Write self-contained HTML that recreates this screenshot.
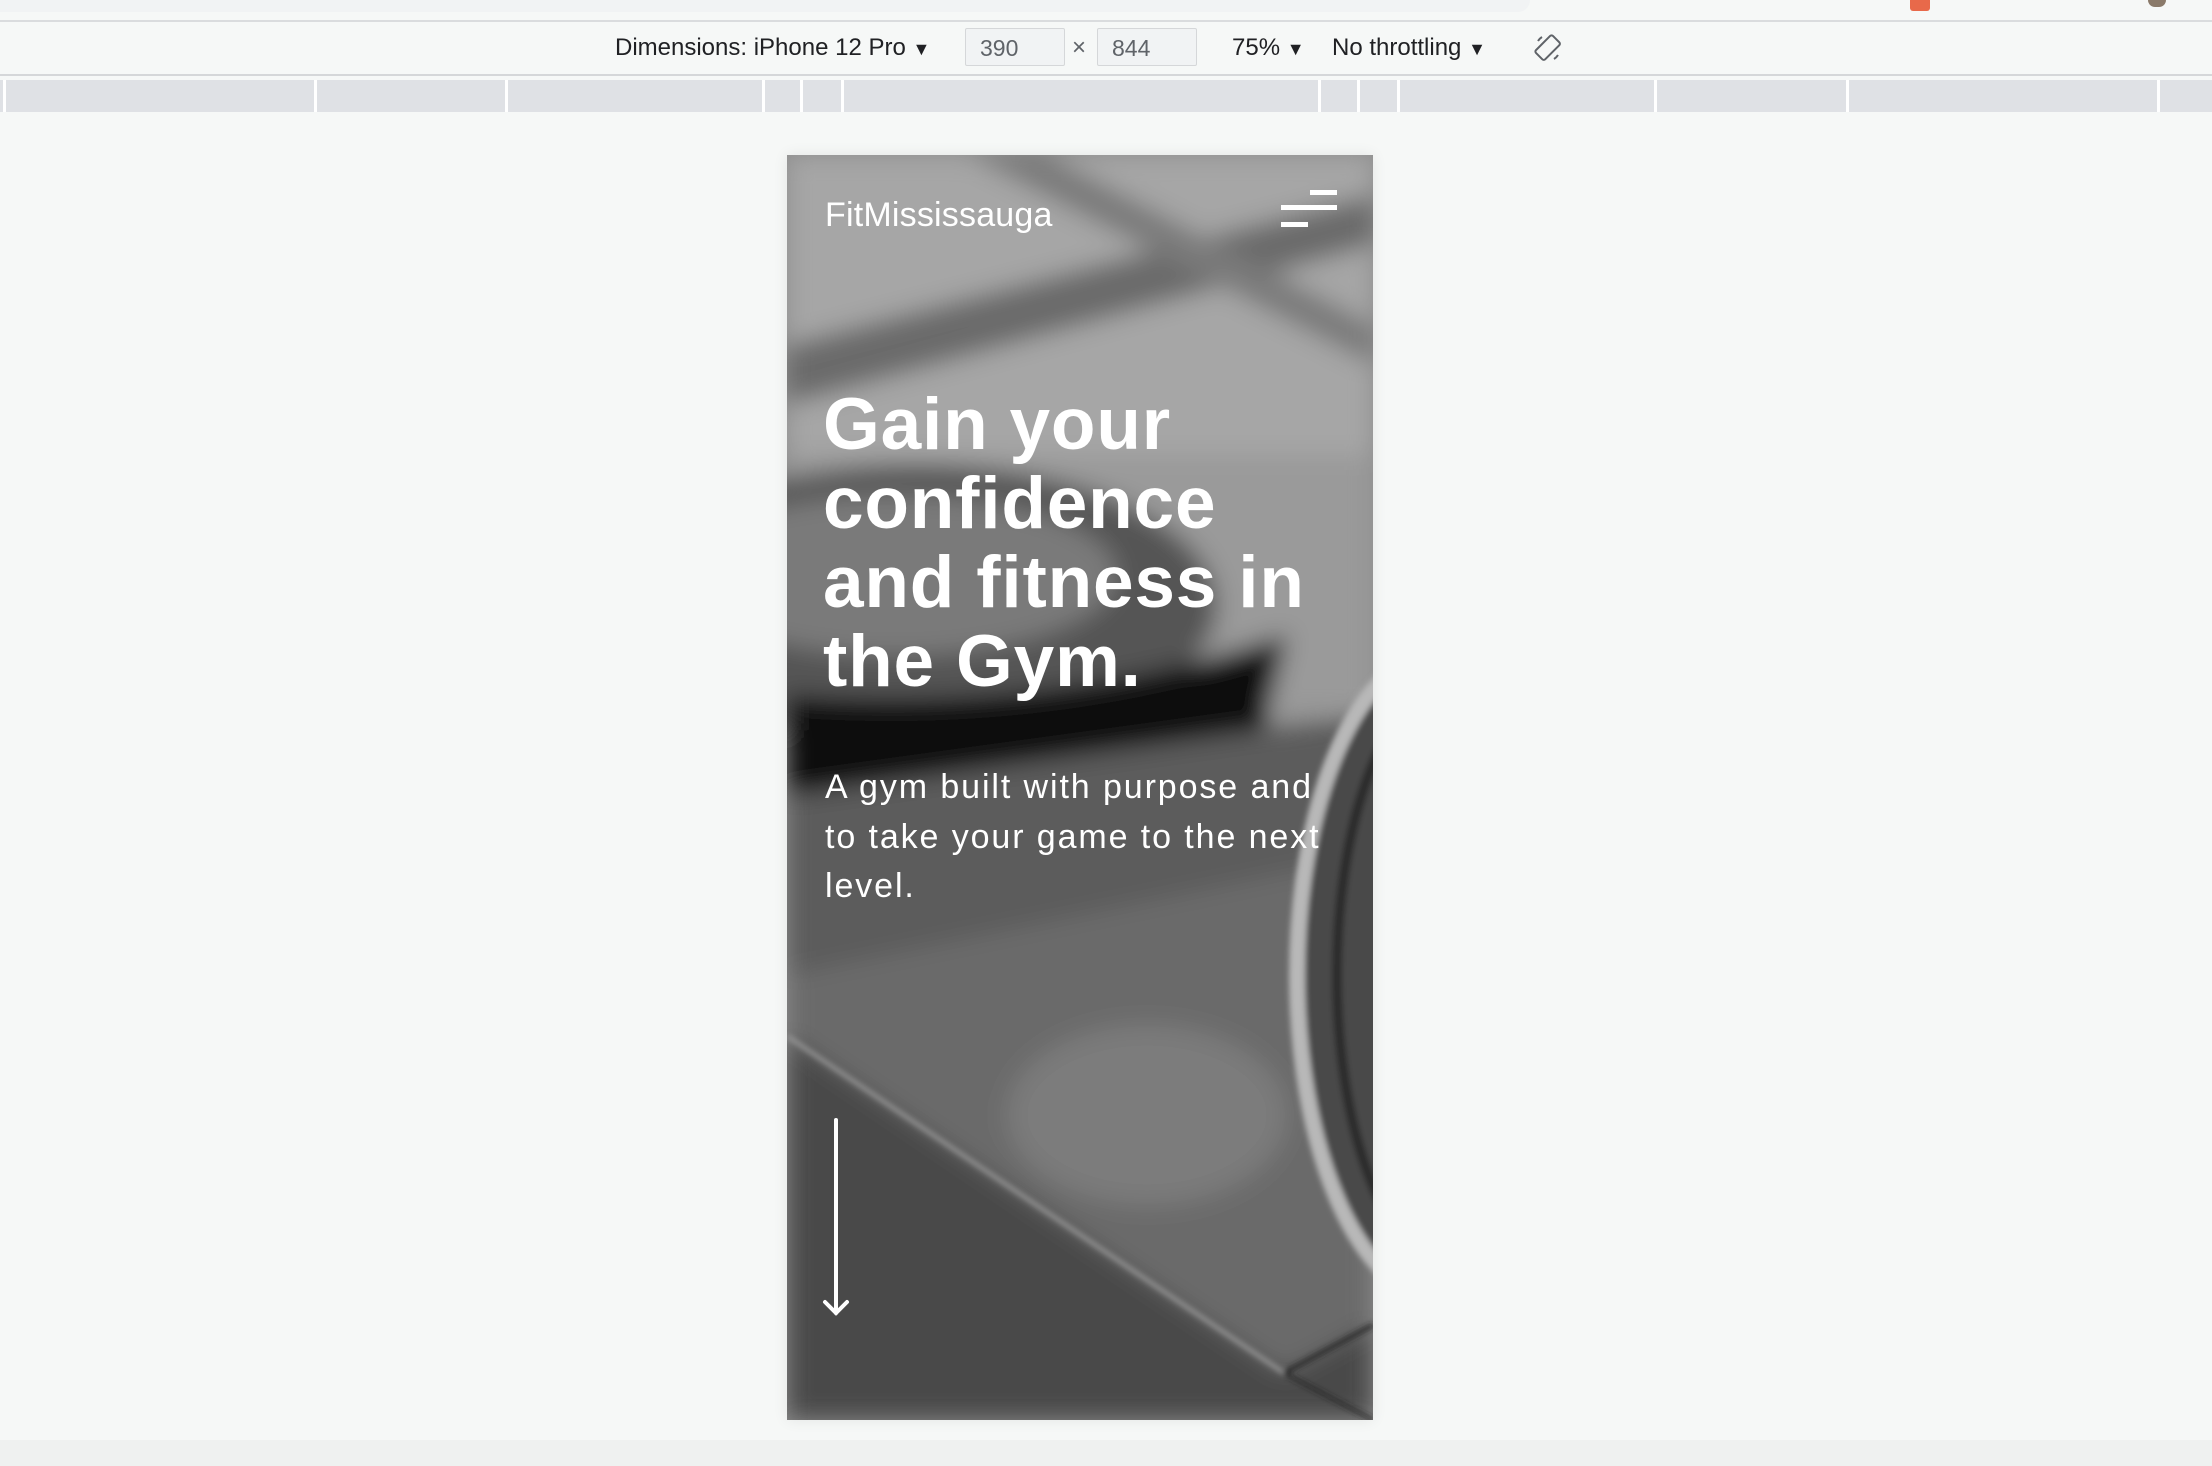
<!DOCTYPE html>
<html><head><meta charset="utf-8"><style>
html,body{margin:0;padding:0}
body{width:2212px;height:1466px;position:relative;overflow:hidden;background:#f6f8f7;font-family:"Liberation Sans",sans-serif}
.abs{position:absolute}
.tb{font-size:24px;color:#202124;top:33px;line-height:30px;white-space:nowrap}
.inp{top:28px;height:38px;border:1px solid #d5d7d9;background:#f1f3f4;border-radius:2px;font-size:23px;color:#5f6368;line-height:38px;padding-left:14px;box-sizing:border-box}
.sep{top:80px;width:3px;height:32px;background:#fff}
#phone{left:787px;top:155px;width:586px;height:1265px;overflow:hidden;box-shadow:0 0 14px rgba(0,0,0,0.08)}
.w{color:#fff;position:absolute}
</style></head><body>
<div class="abs" style="left:0;top:0;width:1530px;height:12px;background:#f1f3f4;border-bottom-right-radius:14px"></div>
<div class="abs" style="left:1910px;top:0;width:20px;height:11px;background:#e8694a;border-radius:0 0 3px 3px"></div>
<div class="abs" style="left:2148px;top:0;width:18px;height:7px;background:#8a7a6a;border-radius:0 0 9px 9px"></div>
<div class="abs" style="left:0;top:20px;width:2212px;height:2px;background:#dadcde"></div>
<div class="abs" style="left:0;top:22px;width:2212px;height:52px;background:#f6f8f7"></div>
<div class="abs" style="left:0;top:74px;width:2212px;height:2px;background:#d5d7d9"></div>
<div class="abs tb" style="left:615px">Dimensions: iPhone 12 Pro <span style="font-size:18px">▼</span></div>
<div class="abs inp" style="left:965px;width:100px">390</div>
<div class="abs tb" style="left:1072px;color:#5f6368">×</div>
<div class="abs inp" style="left:1097px;width:100px">844</div>
<div class="abs tb" style="left:1232px">75% <span style="font-size:18px">▼</span></div>
<div class="abs tb" style="left:1332px">No throttling <span style="font-size:18px">▼</span></div>
<svg class="abs" style="left:1533px;top:33px" width="30" height="30" viewBox="0 0 30 30"><g fill="none" stroke="#5f6368" stroke-width="2"><rect x="8" y="3" width="13" height="24" rx="2" transform="rotate(45 15 15)"/><path d="M5 8 A12 12 0 0 1 9 4 M25 22 A12 12 0 0 1 21 26"/></g></svg>
<div class="abs" style="left:0;top:80px;width:2212px;height:32px;background:#dfe1e5"></div>
<div class="abs sep" style="left:3px"></div><div class="abs sep" style="left:314px"></div><div class="abs sep" style="left:505px"></div><div class="abs sep" style="left:762px"></div><div class="abs sep" style="left:800px"></div><div class="abs sep" style="left:841px"></div><div class="abs sep" style="left:1318px"></div><div class="abs sep" style="left:1357px"></div><div class="abs sep" style="left:1397px"></div><div class="abs sep" style="left:1654px"></div><div class="abs sep" style="left:1846px"></div><div class="abs sep" style="left:2157px"></div>
<div class="abs" style="left:0;top:1440px;width:2212px;height:26px;background:#eff1f0"></div>

<div id="phone" class="abs">
<svg class="abs" style="left:0;top:0" width="586" height="1265" viewBox="0 0 586 1265">
<defs><filter id="b" x="-20%" y="-20%" width="140%" height="140%"><feGaussianBlur stdDeviation="12"/></filter><filter id="b2"><feGaussianBlur stdDeviation="3"/></filter></defs>
<rect width="586" height="1265" fill="#8e8e8e"/>
<g filter="url(#b)">
<rect x="0" y="0" width="586" height="300" fill="#a6a6a6"/>
<polygon points="0,190 586,40 586,90 0,250" fill="#6a6a6a"/>
<polygon points="180,0 260,0 586,170 586,210" fill="#7a7a7a"/>
<rect x="0" y="300" width="586" height="260" fill="#9a9a9a"/>
<ellipse cx="130" cy="450" rx="300" ry="140" fill="#555"/>
<ellipse cx="110" cy="420" rx="220" ry="80" fill="#7a7a7a"/>
<path d="M0,540 Q260,560 500,480 L460,640 L0,640 Z" fill="#0a0a0a"/>
<rect x="0" y="640" width="586" height="625" fill="#6a6a6a"/>
<polygon points="0,640 586,560 586,700 0,820" fill="#5c5c5c"/>
<polygon points="0,881 497,1218 586,1170 586,1265 0,1265" fill="#4a4a4a"/>
<ellipse cx="360" cy="960" rx="140" ry="90" fill="#7c7c7c"/>
</g>
<g filter="url(#b2)">
<ellipse cx="650" cy="820" rx="140" ry="320" fill="#4a4a4a" stroke="#b8b8b8" stroke-width="16"/>
<ellipse cx="660" cy="820" rx="110" ry="285" fill="none" stroke="#2a2a2a" stroke-width="10"/>
<line x1="0" y1="881" x2="497" y2="1218" stroke="#9a9a9a" stroke-width="4"/>
<line x1="497" y1="1218" x2="586" y2="1170" stroke="#222" stroke-width="4"/>
<line x1="497" y1="1218" x2="586" y2="1265" stroke="#222" stroke-width="3"/>
</g>
</svg>
<div class="w" style="left:38px;top:40px;font-size:34px;line-height:40px;letter-spacing:0.2px">FitMississauga</div>
<div class="abs" style="left:523px;top:35px;width:27px;height:5px;background:#fff"></div>
<div class="abs" style="left:494px;top:50px;width:56px;height:5px;background:#fff"></div>
<div class="abs" style="left:494px;top:67px;width:27px;height:5px;background:#fff"></div>
<div class="w" style="left:36px;top:230px;font-size:73px;font-weight:bold;line-height:79px;width:580px;letter-spacing:0.8px;white-space:nowrap">Gain your<br>confidence<br>and fitness in<br>the Gym.</div>
<div class="w" style="left:38px;top:608px;font-size:34px;line-height:49.5px;white-space:nowrap;letter-spacing:1.9px">A gym built with purpose and<br>to take your game to the next<br>level.</div>
<svg class="abs" style="left:34px;top:963px" width="30" height="200" viewBox="0 0 30 200"><g fill="none" stroke="#fff" stroke-width="4" stroke-linecap="round"><path d="M15 2 V195"/><path d="M4 184 L15 195 L26 184"/></g></svg>
</div>
</body></html>
